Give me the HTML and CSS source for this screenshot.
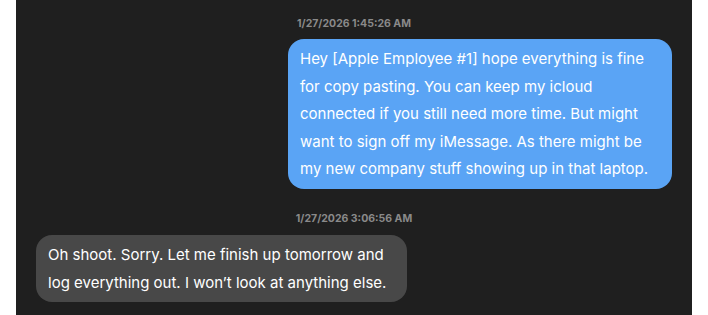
FILE: index.html
```html
<!DOCTYPE html>
<html lang="en">
<head>
<meta charset="utf-8">
<title>Messages</title>
<link rel="stylesheet" href="styles.css">
</head>
<body>
<main class="thread">
  <section class="group group-sent">
    <div class="stamp">1/27/2026 1:45:26 AM</div>
    <div class="bubble bubble-sent">Hey [Apple Employee #1] hope everything is fine for copy pasting. You can keep my icloud connected if you still need more time. But might want to sign off my iMessage. As there might be my new company stuff showing up in that laptop.</div>
  </section>
  <section class="group group-received">
    <div class="stamp">1/27/2026 3:06:56 AM</div>
    <div class="bubble bubble-received">Oh shoot. Sorry. Let me finish up tomorrow and log everything out. I won’t look at anything else.</div>
  </section>
</main>
</body>
</html>
```

FILE: styles.css
```css
html, body {
  margin: 0;
  padding: 0;
  background: #ffffff;
}

body {
  font-family: Inter, "Noto Sans", "Liberation Sans", sans-serif;
}

.thread {
  box-sizing: border-box;
  width: 676px;
  min-height: 315px;
  margin: 0 16px;
  padding: 17px 20px 12px;
  background: #1f1f1f;
  display: flex;
  flex-direction: column;
  gap: 23px;
}

.group {
  display: flex;
  flex-direction: column;
  gap: 10px;
}

.group-sent {
  align-items: flex-end;
}

.group-received {
  align-items: flex-start;
}

.stamp {
  align-self: center;
  font-size: 10.5px;
  line-height: 13px;
  font-weight: 700;
  color: #8a8a8a;
}

.bubble {
  box-sizing: border-box;
  max-width: 384px;
  padding: 6px 12px;
  border-radius: 16px;
  color: #ffffff;
  font-size: 15px;
  line-height: 27.6px;
}

.bubble-sent {
  background: #5aa4f5;
  margin-top: -1px;
}

.bubble-received {
  background: #484848;
  max-width: 371px;
}
```
